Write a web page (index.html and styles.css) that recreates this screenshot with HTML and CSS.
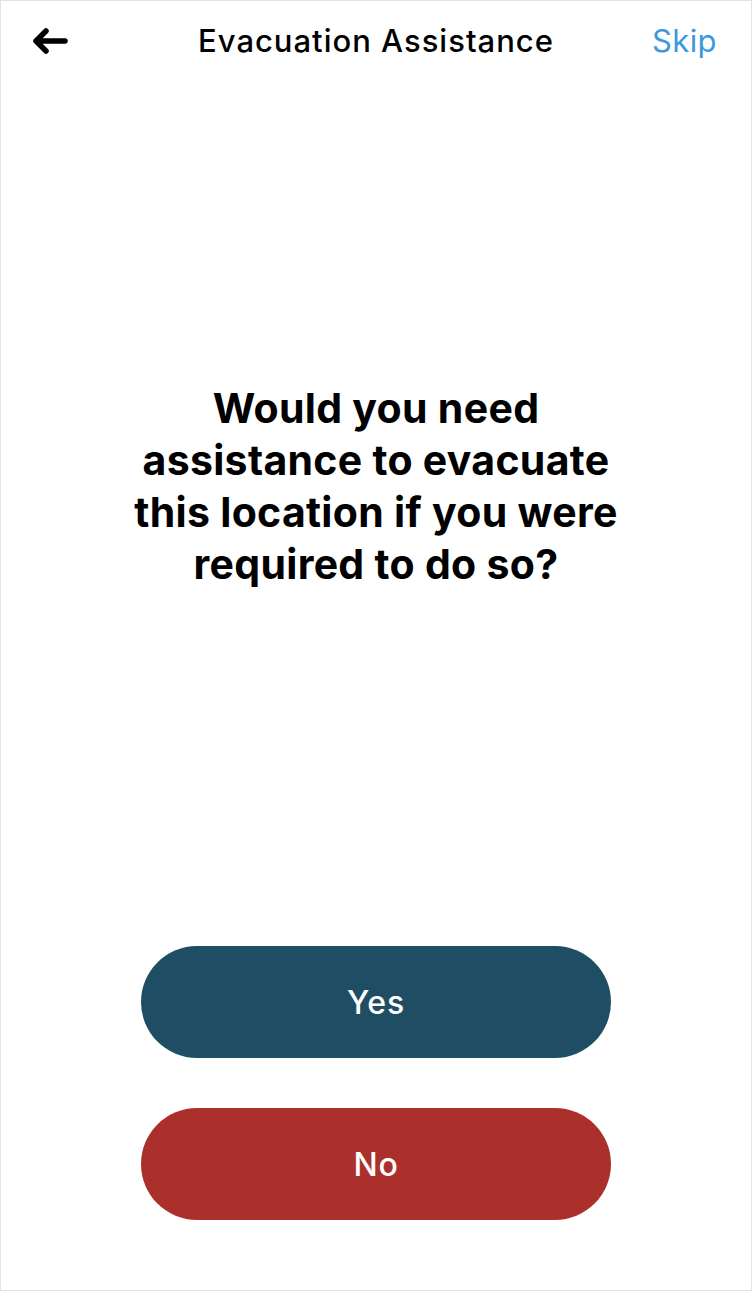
FILE: index.html
```html
<!DOCTYPE html>
<html lang="en">
<head>
    <meta charset="UTF-8">
    <meta name="viewport" content="width=device-width, initial-scale=1.0">
    <title>Evacuation Assistance</title>
    <link rel="stylesheet" href="styles.css">
</head>
<body>
    <div class="screen">
        <header class="topbar">
            <button class="back" aria-label="Back">
                <svg width="38" height="30" viewBox="0 0 38 30">
                    <path d="M34 15 H6 M15 5 L5 15 L15 25" fill="none" stroke="#000" stroke-width="5.5" stroke-linecap="round" stroke-linejoin="round"/>
                </svg>
            </button>
            <h1 class="title">Evacuation Assistance</h1>
            <a class="skip" href="#">Skip</a>
        </header>

        <main class="question">
            <p>Would you need assistance to evacuate this location if you were required to do so?</p>
        </main>

        <div class="answers">
            <button class="answer yes">Yes</button>
            <button class="answer no">No</button>
        </div>
    </div>
</body>
</html>
```

FILE: styles.css
```css
* {
    box-sizing: border-box;
    margin: 0;
    padding: 0;
}

body {
    font-family: Inter, "Liberation Sans", sans-serif;
    background: #ffffff;
    color: #000;
}

.screen {
    width: 752px;
    height: 1291px;
    border: 1px solid #e2e2e2;
    display: flex;
    flex-direction: column;
}

.topbar {
    height: 79px;
    display: grid;
    grid-template-columns: 120px 1fr 120px;
    align-items: center;
}

.back {
    background: none;
    border: none;
    padding-left: 30px;
    display: flex;
    align-items: center;
    cursor: pointer;
}

.title {
    text-align: center;
    font-size: 31px;
    font-weight: 500;
    letter-spacing: 1px;
}

.skip {
    text-align: right;
    padding-right: 34px;
    font-size: 31px;
    letter-spacing: 0.4px;
    color: #3e98de;
    text-decoration: none;
}

.question {
    flex: 1;
    padding: 302px 110px 0;
}

.question p {
    text-align: center;
    font-size: 41px;
    font-weight: 700;
    line-height: 52px;
    letter-spacing: 0.3px;
}

.answers {
    display: flex;
    flex-direction: column;
    align-items: center;
    gap: 50px;
    padding-bottom: 70px;
}

.answer {
    width: 470px;
    height: 112px;
    border: none;
    border-radius: 56px;
    color: #fff;
    font-family: inherit;
    font-size: 32px;
    font-weight: 500;
    letter-spacing: 0.8px;
    cursor: pointer;
}

.yes {
    background: #1f4d63;
}

.no {
    background: #ab302b;
}
```
